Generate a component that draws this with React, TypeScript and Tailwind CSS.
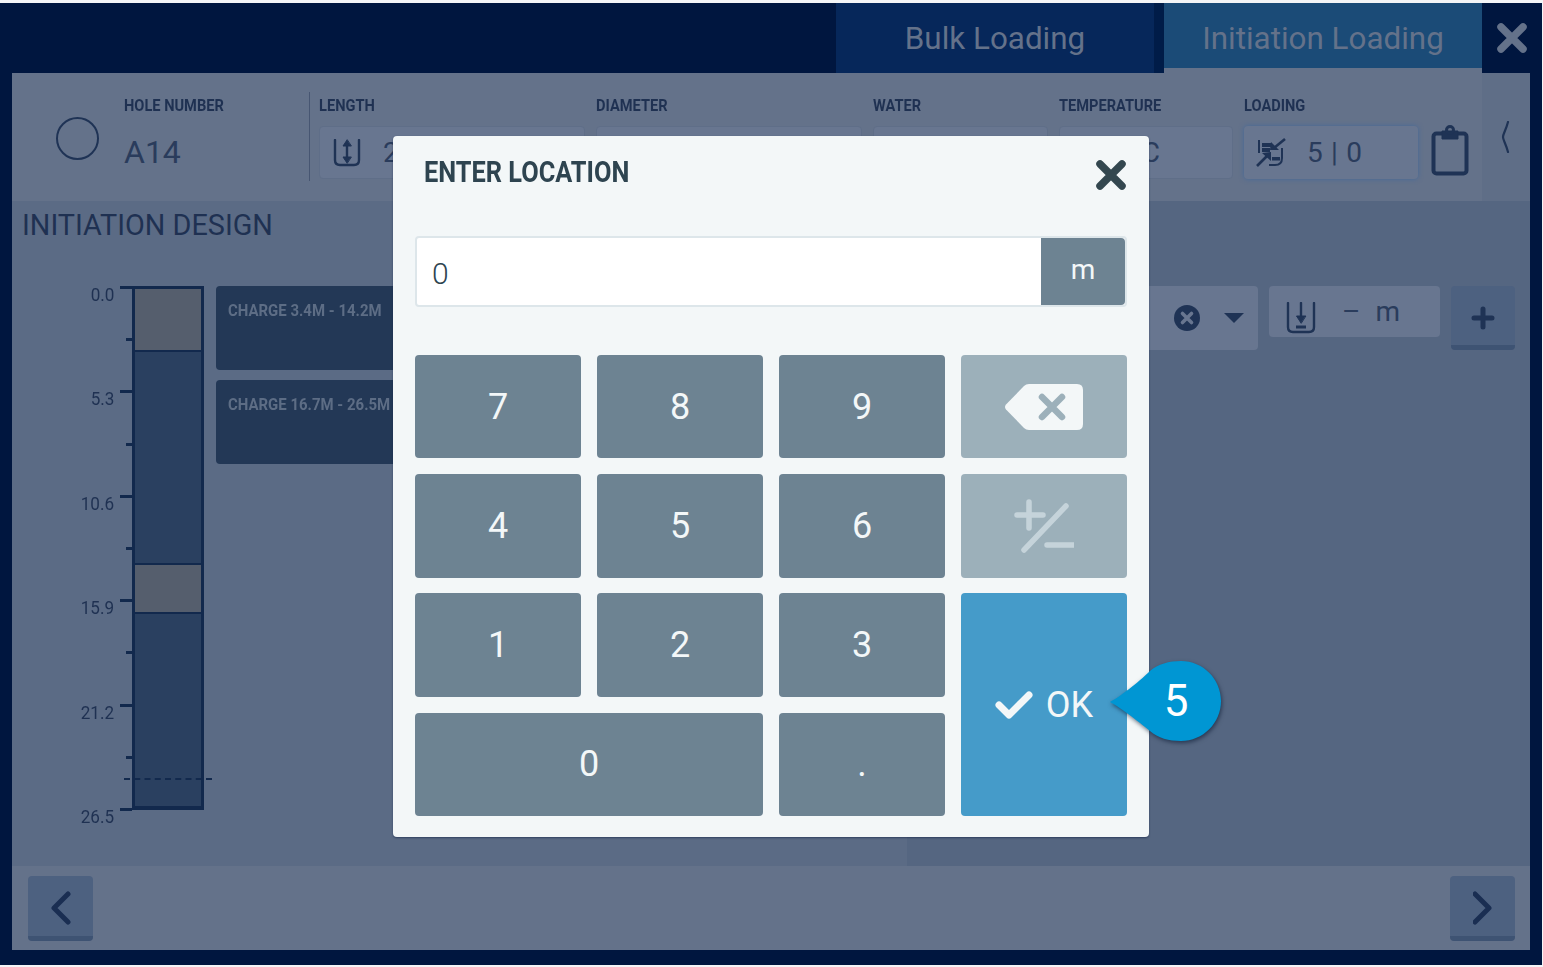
import { ReactNode } from "react";

const ticks = [
  { label: "0.0" },
  {},
  { label: "5.3" },
  {},
  { label: "10.6" },
  {},
  { label: "15.9" },
  {},
  { label: "21.2" },
  {},
  { label: "26.5" },
];

const keys = ["7", "8", "9"];

function Label({ children }: { children: ReactNode }) {
  return (
    <div className="h-5 text-[17px] leading-5 font-bold text-[#1f3152] whitespace-nowrap origin-left scale-x-[0.86]">
      {children}
    </div>
  );
}

function Field({ label, width, glow, children }: { label: string; width: string; glow?: boolean; children?: ReactNode }) {
  return (
    <div className={width}>
      <Label>{label}</Label>
      <div
        className={
          glow
            ? "mt-[11px] h-[53px] flex items-center rounded bg-[#687690] shadow-[0_0_5px_#44699a] text-[28px] text-[#2a3c5c]"
            : "mt-[11px] h-[53px] flex items-center rounded bg-[#687690] border border-[#5f6e88] text-[28px] text-[#2a3c5c]"
        }
      >
        {children}
      </div>
    </div>
  );
}

function Key({ children, className }: { children: ReactNode; className?: string }) {
  return (
    <button className={"flex items-center justify-center rounded bg-[#6d8392] text-[36px] text-[#f3f7f8] " + (className ?? "")}>
      {children}
    </button>
  );
}

function NavButton({ dir }: { dir: "left" | "right" }) {
  return (
    <button className="w-[65px] h-[65px] flex items-center justify-center rounded bg-[#4d6180] border-b-[5px] border-[#3e5373] pt-[5px]">
      <svg width="20" height="34" viewBox="0 0 20 34" fill="none" stroke="#1a2e52" strokeWidth="5" strokeLinecap="round" strokeLinejoin="round">
        {dir === "left" ? <path d="M17 3 3 17l14 14" /> : <path d="m2 3 14 14L2 31" />}
      </svg>
    </button>
  );
}

function CloseX({ color, size }: { color: string; size: number }) {
  return (
    <svg width={size} height={size} viewBox="0 0 30 30" fill="none" stroke={color} strokeWidth="7.5" strokeLinecap="round">
      <path d="M4 4l22 22M26 4 4 26" />
    </svg>
  );
}

export default function App() {
  return (
    <div className="relative w-[1543px] h-[967px] bg-[#f4f5f7] pt-[3px] pb-[2px] pr-px font-['Roboto',sans-serif] overflow-hidden">
      <div className="h-full bg-[#00163f] flex flex-col pl-[12px] pr-[12px]">
        {/* Tabs */}
        <div className="h-[70px] flex shrink-0 pl-[824px]">
          <div className="w-[318px] flex items-center justify-center bg-[#06275a] text-[31.4px] text-[#64728a] pt-[1px]">Bulk Loading</div>
          <div className="w-[10px] bg-[#001c48]" />
          <div className="w-[318px] flex items-center justify-center bg-[#1b4b77] border-b-[5px] border-[#64728a] text-[31.4px] text-[#64728a] pt-[6px]">
            Initiation Loading
          </div>
          <div className="flex-1 flex justify-end items-start pt-[20px] mr-[3px]">
            <CloseX color="#64728a" size={30} />
          </div>
        </div>

        {/* Hole info */}
        <div className="h-[128px] flex shrink-0 bg-[#5f6e87]">
          <div className="w-[1470px] flex bg-[#64728a] pt-[22px] pl-[44px]">
            <div className="w-[43px] h-[43px] mt-[22px] rounded-full border-2 border-[#1f3355]" />
            <div className="ml-[25px] w-[185px]">
              <Label>HOLE NUMBER</Label>
              <div className="mt-[14px] text-[32px] leading-[46px] text-[#2a3c5c]">A14</div>
            </div>
            <div className="w-px h-[89px] -mt-[3px] bg-[#475672]" />
            <div className="ml-[9px] flex gap-[11px]">
              <Field label="LENGTH" width="w-[266px]">
                <svg className="ml-[13px]" width="28" height="28" viewBox="0 0 28 28" fill="none" stroke="#1f3355" strokeWidth="2.4" strokeLinecap="round">
                  <path d="M2 1v20c0 3 2 5 5 5h14c3 0 5-2 5-5V1" />
                  <path d="M14 5v15" />
                  <path d="M14 1l-4 6h8zM14 24l-4-6h8z" fill="#1f3355" strokeWidth="1" />
                </svg>
                <span className="ml-[22px]">2</span>
              </Field>
              <Field label="DIAMETER" width="w-[266px]" />
              <Field label="WATER" width="w-[175px]" />
              <Field label="TEMPERATURE" width="w-[174px]">
                <span className="ml-[46px]">– °C</span>
              </Field>
              <Field label="LOADING" width="w-[174px]" glow>
                <svg className="ml-[12px]" width="30" height="30" viewBox="0 0 30 30" fill="#1f3355" stroke="#1f3355">
                  <path d="M3 2v13" fill="none" strokeWidth="2" />
                  <path d="M6 5h10v4H6zM6 10h8v4H6zM16 19h8v3.5h-8z" stroke="none" />
                  <path d="M29 1 18 10" fill="none" strokeWidth="2.6" />
                  <path d="M14 12l1-8 8 8z" stroke="none" />
                  <path d="M1 28l10-10" fill="none" strokeWidth="2.6" />
                  <path d="M15 14l-9 1 9 8z" stroke="none" />
                  <path d="M26 10v10q0 7-7 7h-6" fill="none" strokeWidth="2" />
                </svg>
                <span className="ml-[21px] tracking-[0.7px]">5 | 0</span>
              </Field>
              <svg className="mt-[30px] ml-[2px]" width="38" height="51" viewBox="0 0 38 51" fill="none" stroke="#1f3355" strokeLinejoin="round">
                <rect x="2.5" y="8.5" width="33" height="40" rx="3" strokeWidth="4" />
                <path d="M11 6h16v8H11z" fill="#1f3355" strokeWidth="1" />
                <circle cx="19" cy="5" r="3.5" strokeWidth="3" />
              </svg>
            </div>
          </div>
          <div className="flex-1 flex justify-center pt-[48px]">
            <svg width="10" height="32" viewBox="0 0 10 32" fill="none" stroke="#1f3355" strokeWidth="2.2" strokeLinecap="round">
              <path d="M7 1C5 9 2 13 2 16c0 3 3 7 5 15" />
            </svg>
          </div>
        </div>

        {/* Design area */}
        <div className="h-[665px] flex shrink-0">
          <div className="w-[895px] bg-[#5b6b85] pl-[10px]">
            <div className="h-[85px] pt-[6px] text-[28.8px] leading-[36px] text-[#1f3152]">INITIATION DESIGN</div>
            <div className="flex">
              <div className="w-[110px]">
                {ticks.map((t, i) => (
                  <div key={i} className="h-[52.2px] flex justify-end">
                    {t.label && (
                      <div className="mr-[6px] mt-[-1px] text-[19px] leading-[20px] text-[#1f3152] origin-right scale-x-[0.9]">{t.label}</div>
                    )}
                    <div className={t.label ? "w-[12px] h-[3px] bg-[#12294d]" : "w-[6px] h-[3px] bg-[#12294d]"} />
                  </div>
                ))}
              </div>
              <div className="relative h-[524px] w-[72px] flex flex-col border-x-[3px] border-t-[3px] border-b-[4px] border-[#12294d]">
                <div className="h-[63px] bg-[#555e6d] border-b-[2px] border-[#12294d]" />
                <div className="h-[213px] bg-[#2a4060] border-b-[2px] border-[#12294d]" />
                <div className="h-[49px] bg-[#555e6d] border-b-[2px] border-[#12294d]" />
                <div className="flex-1 bg-[#2a4060]" />
                <div className="absolute left-[-11px] right-[-11px] top-[489px] border-t-2 border-dashed border-[#12294d]" />
              </div>
              <div className="ml-[12px] w-[400px] flex flex-col gap-[10px]">
                <div className="h-[84px] rounded bg-[#233856] pl-[12px] pt-[14px] text-[17px] leading-5 font-bold text-[#5d6d85]">
                  <div className="origin-left scale-x-[0.88] whitespace-nowrap">CHARGE 3.4M - 14.2M</div>
                </div>
                <div className="h-[84px] rounded bg-[#233856] pl-[12px] pt-[14px] text-[17px] leading-5 font-bold text-[#5d6d85]">
                  <div className="origin-left scale-x-[0.88] whitespace-nowrap">CHARGE 16.7M - 26.5M</div>
                </div>
              </div>
            </div>
          </div>
          <div className="flex-1 bg-[#556681] pt-[85px] pr-[15px]">
            <div className="flex justify-end">
              <div className="w-[300px] h-[64px] flex items-center justify-end rounded bg-[#687690]">
                <svg width="28" height="28" viewBox="0 0 28 28">
                  <circle cx="14" cy="14" r="13" fill="#1f3355" />
                  <path d="M9.5 9.5l9 9M18.5 9.5l-9 9" stroke="#687690" strokeWidth="3.6" strokeLinecap="round" />
                </svg>
                <svg className="ml-[23px] mr-[14px]" width="20" height="10" viewBox="0 0 20 10">
                  <path d="M0 0h20L10 10z" fill="#1f3355" />
                </svg>
              </div>
              <div className="ml-[11px] w-[171px] h-[51px] flex items-start rounded bg-[#687690]">
                <svg className="ml-[17px] mt-[16px]" width="30" height="32" viewBox="0 0 30 32" fill="none" stroke="#1f3355" strokeWidth="2.4" strokeLinecap="round">
                  <path d="M2 1v24c0 3 2 5 5 5h16c3 0 5-2 5-5V1" />
                  <path d="M15 1v15" />
                  <path d="M15 21l-4.5-7h9z" fill="#1f3355" strokeWidth="1" />
                  <path d="M10 25h10" strokeWidth="3" strokeLinecap="butt" />
                </svg>
                <span className="ml-[26px] mt-[8px] text-[28px] leading-[36px] text-[#2a3c5c] whitespace-nowrap">
                  –<span className="ml-[15px]">m</span>
                </span>
              </div>
              <button className="ml-[11px] w-[64px] h-[64px] flex items-center justify-center rounded bg-[#4d6180] border-b-[5px] border-[#3e5373] pt-[5px]">
                <svg width="24" height="24" viewBox="0 0 24 24" stroke="#1f3355" strokeWidth="5" strokeLinecap="round">
                  <path d="M12 3v18M3 12h18" />
                </svg>
              </button>
            </div>
          </div>
        </div>

        {/* Footer */}
        <div className="h-[84px] shrink-0 flex items-center justify-between bg-[#64728a] pl-[16px] pr-[15px]">
          <NavButton dir="left" />
          <NavButton dir="right" />
        </div>
      </div>

      {/* Keypad dialog */}
      <div className="absolute left-[393px] top-[136px] w-[756px] h-[701px] rounded bg-[#f3f7f8] px-[22px] shadow-[0_1px_2px_rgba(20,35,70,0.6)]">
        <div className="h-[100px] flex justify-between pl-[9px] pr-[1px]">
          <div className="pt-[17px] text-[30px] leading-[38px] font-bold text-[#2e4450] origin-left scale-x-[0.845] whitespace-nowrap">ENTER LOCATION</div>
          <div className="pt-[24px]">
            <CloseX color="#33474f" size={30} />
          </div>
        </div>
        <div className="h-[71px] flex rounded border-2 border-[#dde6ea] bg-white">
          <div className="flex-1 flex items-center pl-[15px] pt-[3px] text-[30px] font-light text-[#2e4450]">0</div>
          <div className="w-[84px] flex items-center justify-center rounded-r bg-[#6d8392] text-[28px] text-[#f3f7f8] pb-[4px]">m</div>
        </div>
        <div className="mt-[48px] grid grid-cols-4 grid-rows-4 gap-x-[16px] gap-y-[15.7px] h-[461px]">
          {keys.map((k) => (
            <Key key={k}>{k}</Key>
          ))}
          <button className="flex items-center justify-center rounded bg-[#9cb0ba]">
            <svg width="78" height="48" viewBox="0 0 78 48">
              <path d="M1 21.5 19 3q2-2 5-2h48q6 0 6 6v34q0 6-6 6H24q-3 0-5-2L1 26.5q-2-2.5 0-5z" fill="#f3f7f8" />
              <path d="M37 14l20 20M57 14 37 34" stroke="#9cb0ba" strokeWidth="6.5" strokeLinecap="round" />
            </svg>
          </button>
          {["4", "5", "6"].map((k) => (
            <Key key={k}>{k}</Key>
          ))}
          <button className="flex items-center justify-center rounded bg-[#9cb0ba]">
            <svg width="60" height="54" viewBox="0 0 60 54" fill="none" stroke="#c5d3da" strokeWidth="5.5" strokeLinecap="round">
              <path d="M15 3v26M3 16h26M52 7 10 51M33 46h26" />
            </svg>
          </button>
          {["1", "2", "3"].map((k) => (
            <Key key={k}>{k}</Key>
          ))}
          <button className="row-span-2 flex items-center justify-center gap-[13px] rounded bg-[#459bc9] text-[36px] text-[#f3f7f8]">
            <svg width="38" height="28" viewBox="0 0 38 28" fill="none" stroke="#f3f7f8" strokeWidth="7" strokeLinecap="round" strokeLinejoin="round">
              <path d="M4 14l10 10L34 4" />
            </svg>
            OK
          </button>
          <Key className="col-span-2">0</Key>
          <Key>.</Key>
        </div>

        {/* Step marker */}
        <div className="absolute left-[717px] top-[525px] w-[111px] h-[80px]">
          <svg className="drop-shadow-[1px_2px_2px_rgba(10,25,50,0.6)]" width="111" height="80" viewBox="0 0 111 80">
            <path d="M0 41C8 37 28 22 40 10 48 3 59 0 71 0c22 0 40 18 40 40s-18 40-40 40c-12 0-23-3-31-10C28 60 8 45 0 41Z" fill="#0096d3" />
          </svg>
          <div className="absolute left-[46px] top-0 w-[40px] h-[80px] flex items-center justify-center text-[44px] text-white">5</div>
        </div>
      </div>
    </div>
  );
}
